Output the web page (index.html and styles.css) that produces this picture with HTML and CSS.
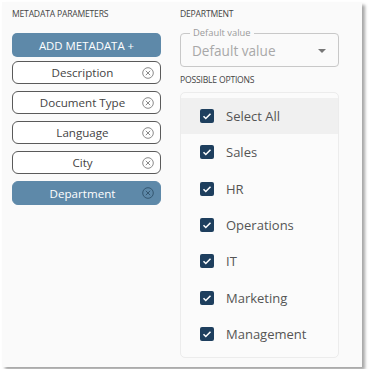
FILE: index.html
```html
<!DOCTYPE html>
<html lang="en">
<head>
<meta charset="UTF-8"/>
<title>Metadata parameters</title>
<link rel="stylesheet" href="styles.css">
</head>
<body>

<div class="panel">
  <section class="params">
    <h3 class="caption">Metadata parameters</h3>
    <button class="add-btn">ADD METADATA +</button>
    <div class="chips">
      <div class="chip"><span>Description</span><svg class="x" viewBox="0 0 12 12"><circle cx="6" cy="6" r="5.3"/><path d="M3.8 3.8l4.4 4.4M8.2 3.8l-4.4 4.4"/></svg></div>
      <div class="chip"><span>Document Type</span><svg class="x" viewBox="0 0 12 12"><circle cx="6" cy="6" r="5.3"/><path d="M3.8 3.8l4.4 4.4M8.2 3.8l-4.4 4.4"/></svg></div>
      <div class="chip"><span>Language</span><svg class="x" viewBox="0 0 12 12"><circle cx="6" cy="6" r="5.3"/><path d="M3.8 3.8l4.4 4.4M8.2 3.8l-4.4 4.4"/></svg></div>
      <div class="chip"><span>City</span><svg class="x" viewBox="0 0 12 12"><circle cx="6" cy="6" r="5.3"/><path d="M3.8 3.8l4.4 4.4M8.2 3.8l-4.4 4.4"/></svg></div>
      <div class="chip active"><span>Department</span><svg class="x" viewBox="0 0 12 12"><circle cx="6" cy="6" r="5.3"/><path d="M3.8 3.8l4.4 4.4M8.2 3.8l-4.4 4.4"/></svg></div>
    </div>
  </section>

  <section class="detail">
    <h3 class="caption">Department</h3>
    <fieldset class="select">
      <legend>Default value</legend>
      <span class="value">Default value</span>
      <span class="arrow"></span>
    </fieldset>
    <h3 class="caption options-cap">Possible options</h3>
    <ul class="options">
      <li class="hl"><span class="cb"><svg viewBox="0 0 14 14"><path d="M3.5 7.2l2.3 2.3 4.7-4.8"/></svg></span>Select All</li>
      <li><span class="cb"><svg viewBox="0 0 14 14"><path d="M3.5 7.2l2.3 2.3 4.7-4.8"/></svg></span>Sales</li>
      <li><span class="cb"><svg viewBox="0 0 14 14"><path d="M3.5 7.2l2.3 2.3 4.7-4.8"/></svg></span>HR</li>
      <li><span class="cb"><svg viewBox="0 0 14 14"><path d="M3.5 7.2l2.3 2.3 4.7-4.8"/></svg></span>Operations</li>
      <li><span class="cb"><svg viewBox="0 0 14 14"><path d="M3.5 7.2l2.3 2.3 4.7-4.8"/></svg></span>IT</li>
      <li><span class="cb"><svg viewBox="0 0 14 14"><path d="M3.5 7.2l2.3 2.3 4.7-4.8"/></svg></span>Marketing</li>
      <li><span class="cb"><svg viewBox="0 0 14 14"><path d="M3.5 7.2l2.3 2.3 4.7-4.8"/></svg></span>Management</li>
    </ul>
  </section>
</div>

</body>
</html>
```

FILE: styles.css
```css
body {
  margin: 0; background: #fff;
  font-family: "Open Sans", Arial, sans-serif;
}
.panel {
  margin: 2px; width: 360px; height: 365px;
  box-sizing: border-box; padding: 6px 23px 0 10px;
  background: #fafafa;
  box-shadow: 3px 3px 3px rgba(0,0,0,0.35);
  display: flex; gap: 19px;
}
.params { width: 149px; }
.detail { width: 159px; }
.caption {
  margin: 0; font-size: 8.6px; line-height: 12px;
  font-weight: normal; text-transform: uppercase;
  color: #444; letter-spacing: -0.2px;
}
.add-btn {
  display: block; width: 100%; height: 24px;
  margin-top: 13px; padding: 0;
  background: #5e89a9; color: #fff; border: none; border-radius: 5px;
  font-family: inherit; font-size: 11.4px;
}
.chips {
  display: flex; flex-direction: column; gap: 7px;
  margin-top: 4px;
}
.chip {
  height: 23px; box-sizing: border-box;
  border: 1px solid #5a5a5a; border-radius: 6px; background: #fff;
  display: flex; align-items: center;
  padding: 0 6px 0 10px;
  font-size: 11.6px; color: #444;
}
.chip span { flex: 1; text-align: center; }
.chip .x {
  width: 12px; height: 12px; fill: none;
  stroke: #8a8a8a; stroke-width: 1;
}
.chip.active {
  background: #5e89a9; border-color: #5e89a9; color: #fff;
  height: 24px;
}
.chip.active .x { stroke: #345670; }
.select {
  margin: 8px 0 0; padding: 0 10px 3px 11px;
  height: 39px; box-sizing: border-box;
  border: 1px solid #c8c8c8; border-radius: 4px;
  display: flex; align-items: center;
  min-width: 0;
}
.select legend {
  padding: 0 3px; margin-left: -2px;
  font-size: 9.4px; line-height: 10px; color: #9a9a9a;
}
.select .value { flex: 1; font-size: 13.6px; color: #a8a8a8; line-height: 20px; }
.select .arrow {
  width: 0; height: 0; margin-right: 2px;
  border-left: 4px solid transparent; border-right: 4px solid transparent;
  border-top: 4px solid #777;
}
.options-cap { margin-top: 7px; }
.options {
  list-style: none; margin: 6px 0 0; padding: 5px 0 6px;
  height: 266px; box-sizing: border-box;
  border: 1px solid #ececec; border-radius: 5px;
  background: #fbfbfb;
}
.options li {
  height: 36.3px; display: flex; align-items: center;
  padding-left: 19px; gap: 12px;
  font-size: 13px; color: #555;
}
.options li.hl { background: #f0f0f0; }
.cb {
  width: 14px; height: 14px; border-radius: 2px;
  background: #1e3f5e; display: flex;
}
.cb svg {
  width: 14px; height: 14px; fill: none;
  stroke: #fff; stroke-width: 1.5;
}
```
